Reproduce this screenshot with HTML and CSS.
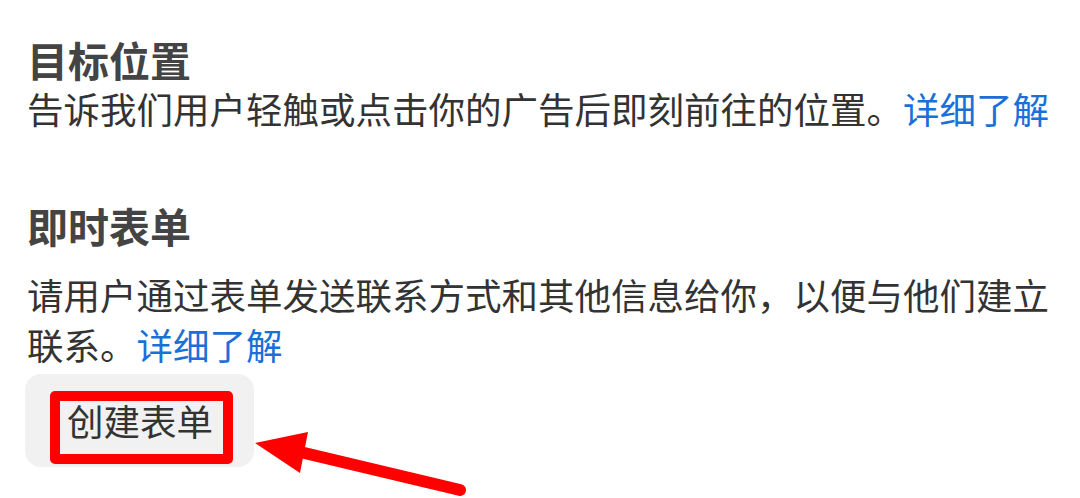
FILE: index.html
```html
<!DOCTYPE html>
<html lang="zh-CN">
<head>
    <meta charset="UTF-8">
    <meta name="viewport" content="width=device-width, initial-scale=1.0">
    <title>目标位置</title>
    <link rel="stylesheet" href="styles.css">
</head>
<body>
    <div class="page">
        <div class="section">
            <h2>目标位置</h2>
            <p>告诉我们用户轻触或点击你的广告后即刻前往的位置。<a href="#">详细了解</a></p>
        </div>

        <div class="section form-section">
            <h2>即时表单</h2>
            <p>请用户通过表单发送联系方式和其他信息给你，以便与他们建立联系。<a href="#">详细了解</a></p>
            <div class="btn-wrap">
                <button class="create-btn">创建表单</button>
                <span class="mark-box"></span>
            </div>
        </div>

        <!-- annotation arrow -->
        <svg class="mark-arrow" width="1080" height="498" viewBox="0 0 1080 498">
            <line x1="296" y1="451" x2="460" y2="490" stroke="#ff0000" stroke-width="12" stroke-linecap="round"/>
            <polygon points="255,443 308,432 300,473" fill="#ff0000"/>
        </svg>
    </div>
</body>
</html>
```

FILE: styles.css
```css
body { margin: 0; background: #fff; font-family: "Noto Sans CJK SC", "Noto Sans", sans-serif; color: #333; }
.page { position: relative; width: 1080px; height: 498px; padding: 34px 18px 0 27px; box-sizing: border-box; overflow: hidden; }
.section h2 { margin: 0; font-size: 41px; line-height: 50px; font-weight: 700; color: #444; }
.section p { margin: 0; font-size: 36.5px; line-height: 50px; color: #333; }
.section a { color: #1b6fd8; text-decoration: none; }
.form-section { margin-top: 66px; }
.form-section p { margin-top: 20px; }
.btn-wrap { position: relative; display: inline-block; margin-top: 4px; margin-left: -2px; }
.create-btn { height: 93px; padding: 0 41px 0 42px; border: none; border-radius: 16px; background: #f1f1f1; font-family: inherit; font-size: 36.5px; color: #333; }
.mark-box { position: absolute; left: 25px; top: 17px; width: 183px; height: 73px; box-sizing: border-box; border: 10px solid #ff0000; border-radius: 5px; }
.mark-arrow { position: absolute; left: 0; top: 0; pointer-events: none; }
```
